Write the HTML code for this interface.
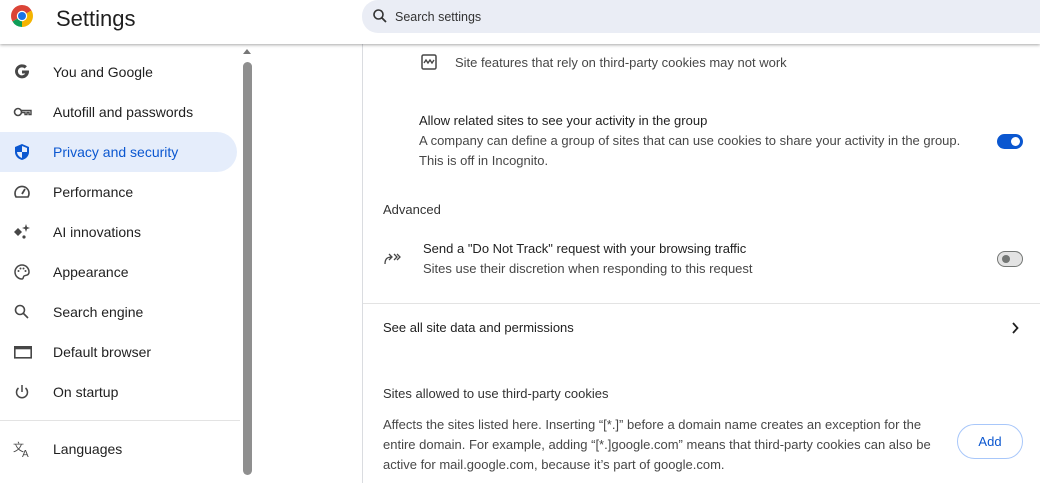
<!DOCTYPE html>
<html><head><meta charset="utf-8"><style>
*{margin:0;padding:0;box-sizing:border-box}
body{width:1040px;height:483px;overflow:hidden;background:#fff;font-family:"Liberation Sans",sans-serif;color:#1f1f1f;position:relative}
.hdr{position:absolute;left:0;top:0;width:1040px;height:44px;background:#fff;box-shadow:0 1px 3px rgba(0,0,0,.35);z-index:5}
.title{position:absolute;left:56px;top:6px;font-size:22px;color:#1f1f1f}
.search{position:absolute;left:362px;top:0;width:678px;height:33px;background:#eaedf5;border-radius:0 0 0 16px;border-top-left-radius:16px}
.search span{position:absolute;left:33px;top:10px;font-size:12.5px;color:#333}
.nav{position:absolute;left:0;font-size:14px;color:#1f1f1f;height:40px;width:237px}
.nav svg{position:absolute;left:13px;top:11px}
.nav span{position:absolute;left:53px;top:12px}
.sel{background:#e5edfb;border-radius:0 20px 20px 0;color:#0b57d0}
.scroll{position:absolute;left:243px;top:62px;width:9px;height:413px;background:#8f8f8f;border-radius:5px}
.card{position:absolute;left:362px;top:44px;width:678px;height:439px;border-left:1px solid #dadce0}
.t{position:absolute;font-size:13px;line-height:20px}
.s{color:#474747}
.line{position:absolute;left:363px;width:677px;height:1px;background:#e3e3e3}
</style></head><body>
<div class="hdr">
<svg style="position:absolute;left:11px;top:5px" width="22" height="22" viewBox="0 0 22 22">
<path d="M11 11 L11 0 A11 11 0 0 1 20.5 5.5 Z" fill="#db4437"/>
<path d="M11 0 A11 11 0 0 0 1.5 16.5 L11 11 Z" fill="#db4437"/>
<path d="M1.5 16.5 A11 11 0 0 0 11 22 L11 11Z" fill="#0f9d58"/>
<path d="M11 22 A11 11 0 0 0 20.5 5.5 L11 11Z" fill="#f4b400"/>
<circle cx="11" cy="11" r="5.2" fill="#fff"/><circle cx="11" cy="11" r="4" fill="#1a73e8"/></svg>
<div class="title">Settings</div>
<div class="search"><svg style="position:absolute;left:10px;top:8px" width="16" height="16" viewBox="0 0 16 16"><circle cx="6.5" cy="6.5" r="4.5" fill="none" stroke="#333" stroke-width="1.6"/><path d="M10 10 L14 14" stroke="#333" stroke-width="1.8"/></svg><span>Search settings</span></div>
</div>

<div class="nav" style="top:52px"><svg width="18" height="18" viewBox="0 0 18 18"><path d="M15 7.5H9v3h3.3A4 4 0 1 1 11.7 5.5l2.2-2.2A7 7 0 1 0 16 9c0-.5 0-1-.1-1.5z" fill="#474747"/></svg><span>You and Google</span></div>
<div class="nav" style="top:92px"><svg width="20" height="18" viewBox="0 0 20 18"><circle cx="5" cy="9" r="3.5" fill="none" stroke="#474747" stroke-width="1.6"/><path d="M8.5 7.5h9.5v4h-2v-2h-2v2h-2v-2h-3.5" fill="none" stroke="#474747" stroke-width="1.4"/></svg><span>Autofill and passwords</span></div>
<div class="nav sel" style="top:132px"><svg width="18" height="18" viewBox="0 0 18 18"><path d="M9 1 L16 4 V9 C16 13 13 16 9 17 C5 16 2 13 2 9 V4 Z" fill="#0b57d0"/><path d="M9 3 V9 H14 V5 Z M9 9 V15 C6.5 14 4.2 12 4 9Z" fill="#fff" opacity=".9"/></svg><span>Privacy and security</span></div>
<div class="nav" style="top:172px"><svg width="18" height="18" viewBox="0 0 18 18"><path d="M3 14 A7 7 0 1 1 15 14 Z" fill="none" stroke="#474747" stroke-width="1.6"/><path d="M9 11 L12 6" stroke="#474747" stroke-width="1.8"/></svg><span>Performance</span></div>
<div class="nav" style="top:212px"><svg width="18" height="18" viewBox="0 0 18 18"><path d="M5 5 L9 9 L5 13 L1 9Z" fill="#474747"/><path d="M13 1 L14 4 L17 5 L14 6 L13 9 L12 6 L9 5 L12 4Z" fill="#474747"/><circle cx="11" cy="14" r="1.6" fill="#474747"/></svg><span>AI innovations</span></div>
<div class="nav" style="top:252px"><svg width="18" height="18" viewBox="0 0 18 18"><path d="M9 2 A7 7 0 0 0 9 16 C10.5 16 10 14 11 13 C12 12 16 13 16 9 A7 7 0 0 0 9 2Z" fill="none" stroke="#474747" stroke-width="1.5"/><circle cx="5.5" cy="8" r="1" fill="#474747"/><circle cx="7.5" cy="5.5" r="1" fill="#474747"/><circle cx="10.5" cy="5.5" r="1" fill="#474747"/><circle cx="12.5" cy="8" r="1" fill="#474747"/></svg><span>Appearance</span></div>
<div class="nav" style="top:292px"><svg width="18" height="18" viewBox="0 0 18 18"><circle cx="7" cy="7" r="4.5" fill="none" stroke="#474747" stroke-width="1.6"/><path d="M10.5 10.5 L15 15" stroke="#474747" stroke-width="1.6"/></svg><span>Search engine</span></div>
<div class="nav" style="top:332px"><svg width="20" height="18" viewBox="0 0 20 18"><rect x="1.8" y="3.8" width="16.4" height="11" fill="none" stroke="#474747" stroke-width="1.6"/><rect x="1.8" y="3.8" width="16.4" height="2.5" fill="#474747"/></svg><span>Default browser</span></div>
<div class="nav" style="top:372px"><svg width="18" height="18" viewBox="0 0 18 18"><path d="M5.5 5 A5.5 5.5 0 1 0 12.5 5" fill="none" stroke="#474747" stroke-width="1.5"/><path d="M9 2 V9" stroke="#474747" stroke-width="1.5"/></svg><span>On startup</span></div>
<div style="position:absolute;left:0;top:420px;width:240px;height:1px;background:#e3e3e3"></div>
<div class="nav" style="top:429px"><svg width="20" height="18" viewBox="0 0 20 18"><text x="0" y="11" font-size="11" fill="#474747" font-family="Noto Sans CJK SC,sans-serif">文</text><text x="9" y="17" font-size="10" fill="#474747">A</text></svg><span>Languages</span></div>
<div style="position:absolute;left:243px;top:49px;width:0;height:0;border-left:4px solid transparent;border-right:4px solid transparent;border-bottom:5px solid #777"></div>
<div class="scroll"></div>

<div class="card"></div>
<svg style="position:absolute;left:421px;top:54px" width="16" height="16" viewBox="0 0 16 16"><rect x="1" y="1" width="14" height="14" rx="1.5" fill="none" stroke="#474747" stroke-width="1.5"/><path d="M3 9 L5 6 L7 9 L9 6 L11 9 L13 6" fill="none" stroke="#474747" stroke-width="1.4"/></svg>
<div class="t s" style="left:455px;top:53px">Site features that rely on third-party cookies may not work</div>
<div class="t" style="left:419px;top:111px">Allow related sites to see your activity in the group</div>
<div class="t s" style="left:419px;top:131px">A company can define a group of sites that can use cookies to share your activity in the group.</div>
<div class="t s" style="left:419px;top:151px">This is off in Incognito.</div>
<div style="position:absolute;left:997px;top:134px;width:26px;height:15px;border-radius:8px;background:#0b57d0"><div style="position:absolute;right:3px;top:3px;width:9px;height:9px;border-radius:50%;background:#fff"></div></div>
<div class="t" style="left:383px;top:200px;color:#333">Advanced</div>
<svg style="position:absolute;left:384px;top:252px" width="18" height="14" viewBox="0 0 18 14"><path d="M1 12 C1 7 3 5 8 5 M5 2 L8 5 L5 8" fill="none" stroke="#474747" stroke-width="1.3"/><path d="M10 2 L13 5 L10 8 M13 2 L16 5 L13 8" fill="none" stroke="#474747" stroke-width="1.3"/></svg>
<div class="t" style="left:423px;top:239px">Send a "Do Not Track" request with your browsing traffic</div>
<div class="t s" style="left:423px;top:259px">Sites use their discretion when responding to this request</div>
<div style="position:absolute;left:997px;top:251px;width:26px;height:16px;border-radius:8px;background:#e3e3e3;border:1px solid #747775"><div style="position:absolute;left:4px;top:3px;width:8px;height:8px;border-radius:50%;background:#747775"></div></div>
<div class="line" style="top:303px"></div>
<div class="t" style="left:383px;top:318px">See all site data and permissions</div>
<svg style="position:absolute;left:1010px;top:321px" width="10" height="14" viewBox="0 0 10 14"><path d="M3 2 L7.5 7 L3 12" fill="none" stroke="#1f1f1f" stroke-width="1.8"/></svg>
<div class="t" style="left:383px;top:384px;color:#333">Sites allowed to use third-party cookies</div>
<div class="t s" style="left:383px;top:415px">Affects the sites listed here. Inserting “[*.]” before a domain name creates an exception for the</div>
<div class="t s" style="left:383px;top:435px">entire domain. For example, adding “[*.]google.com” means that third-party cookies can also be</div>
<div class="t s" style="left:383px;top:455px">active for mail.google.com, because it’s part of google.com.</div>
<div style="position:absolute;left:957px;top:424px;width:66px;height:35px;border:1px solid #a8c7fa;border-radius:18px;color:#0b57d0;font-size:13px;text-align:center;line-height:33px">Add</div>
</body></html>
